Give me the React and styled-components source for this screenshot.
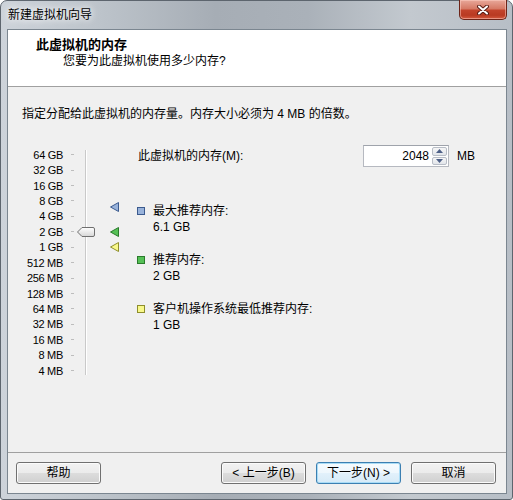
import styled, { createGlobalStyle } from 'styled-components'

const GlobalStyle = createGlobalStyle`
  html, body {
    margin: 0;
    padding: 0;
    background: #ffffff;
  }
  body {
    font-family: "Liberation Sans", "Noto Sans CJK SC", sans-serif;
    font-size: 12px;
    color: #000;
  }
`

const sizes = ['64 GB', '32 GB', '16 GB', '8 GB', '4 GB', '2 GB', '1 GB', '512 MB', '256 MB', '128 MB', '64 MB', '32 MB', '16 MB', '8 MB', '4 MB']
const ROW = 15.43

const legend = [
    { key: 'max', label: '最大推荐内存:', value: '6.1 GB', mb: 6246, fill: '#98b2da', line: '#3b5a8e' },
    { key: 'rec', label: '推荐内存:', value: '2 GB', mb: 2048, fill: '#55c056', line: '#2a7a2b' },
    { key: 'min', label: '客户机操作系统最低推荐内存:', value: '1 GB', mb: 1024, fill: '#f8f88a', line: '#8e8e2c' },
]

// row centre for a memory size on the log2 scale (64 GB at the top)
const markerTop = (mb) => 7.7 + (16 - Math.log2(mb)) * ROW - 5

const App = () => {

    return (
        <>
            <GlobalStyle />
            <Frame>
                <TitleBar>
                    <WindowTitle>新建虚拟机向导</WindowTitle>
                    <CloseButton>
                        <svg width="12" height="10" viewBox="0 0 12 10">
                            <path d="M2 1.5 L10 8.5 M10 1.5 L2 8.5" stroke="#5a1d15" strokeWidth="4" strokeLinecap="round" />
                            <path d="M2 1.5 L10 8.5 M10 1.5 L2 8.5" stroke="#fff" strokeWidth="2" strokeLinecap="round" />
                        </svg>
                    </CloseButton>
                </TitleBar>
                <Client>
                    <Header>
                        <HeaderTitle>此虚拟机的内存</HeaderTitle>
                        <HeaderSub>您要为此虚拟机使用多少内存?</HeaderSub>
                    </Header>
                    <Body>
                        <Description>指定分配给此虚拟机的内存量。内存大小必须为 4 MB 的倍数。</Description>
                        <Main>
                            <Slider>
                                <Labels>
                                    {sizes.map(s => (
                                        <LabelRow key={s}>
                                            <SizeLabel>{s}</SizeLabel>
                                            <Tick />
                                        </LabelRow>
                                    ))}
                                </Labels>
                                <TrackColumn>
                                    <TrackLine />
                                    <Thumb style={{ top: markerTop(2048) }}>
                                        <svg width="18" height="10" viewBox="0 0 18 10">
                                            <defs>
                                                <linearGradient id="thumbg" x1="0" y1="0" x2="0" y2="1">
                                                    <stop offset="0" stopColor="#ffffff" />
                                                    <stop offset="1" stopColor="#d6d6d6" />
                                                </linearGradient>
                                            </defs>
                                            <path d="M0.5 5 L5 0.5 H16 Q17.5 0.5 17.5 2 V8 Q17.5 9.5 16 9.5 H5 Z" fill="url(#thumbg)" stroke="#6f6f6f" />
                                        </svg>
                                    </Thumb>
                                </TrackColumn>
                                <MarkerColumn>
                                    {legend.map(m => (
                                        <Marker key={m.key} style={{ top: markerTop(m.mb) }}>
                                            <svg width="9" height="10" viewBox="0 0 9 10">
                                                <path d="M0.5 5 L8.5 0.5 V9.5 Z" fill={m.fill} stroke={m.line} strokeLinejoin="round" />
                                            </svg>
                                        </Marker>
                                    ))}
                                </MarkerColumn>
                            </Slider>
                            <Panel>
                                <MemRow>
                                    <MemLabel>此虚拟机的内存(M):</MemLabel>
                                    <SpinBox>
                                        <SpinValue>2048</SpinValue>
                                        <SpinButtons>
                                            <SpinButton>
                                                <svg width="7" height="4" viewBox="0 0 7 4"><path d="M0 4 L3.5 0 L7 4 Z" fill="#4e6087" /></svg>
                                            </SpinButton>
                                            <SpinButton>
                                                <svg width="7" height="4" viewBox="0 0 7 4"><path d="M0 0 L3.5 4 L7 0 Z" fill="#4e6087" /></svg>
                                            </SpinButton>
                                        </SpinButtons>
                                    </SpinBox>
                                    <Unit>MB</Unit>
                                </MemRow>
                                <Legend>
                                    {legend.map(m => (
                                        <LegendItem key={m.key}>
                                            <Swatch $fill={m.fill} $line={m.line} />
                                            <LegendText>
                                                <div>{m.label}</div>
                                                <div>{m.value}</div>
                                            </LegendText>
                                        </LegendItem>
                                    ))}
                                </Legend>
                            </Panel>
                        </Main>
                    </Body>
                    <Footer>
                        <Button>帮助</Button>
                        <Spacer />
                        <Button>&lt; 上一步(B)</Button>
                        <Button $focused>下一步(N) &gt;</Button>
                        <Button>取消</Button>
                    </Footer>
                </Client>
            </Frame>
        </>
    )

}


const Frame = styled.div`
    box-sizing: border-box;
    width: 513px;
    height: 500px;
    display: flex;
    flex-direction: column;
    padding: 0 5px 5px 6px;
    border: 1px solid #5d656e;
    border-radius: 7px 7px 3px 3px;
    background: linear-gradient(90deg, #cdd3da 0%, #bcc3ca 20%, #a6adb5 42%, #aab1b9 60%, #c3c9cf 80%, #b7bec6 100%);
`

const TitleBar = styled.div`
    height: 28px;
    display: flex;
    align-items: flex-start;
`

const WindowTitle = styled.div`
    margin: 6px 0 0 1px;
    line-height: 16px;
    text-shadow: 0 0 6px #fff, 0 0 10px rgba(255, 255, 255, 0.8);
`

const CloseButton = styled.div`
    box-sizing: border-box;
    margin: -1px 0 0 auto;
    width: 48px;
    height: 20px;
    display: flex;
    align-items: center;
    justify-content: center;
    border: 1px solid #6d2418;
    border-top: none;
    border-radius: 0 0 5px 5px;
    background: linear-gradient(#e8a89a 0%, #d67a66 45%, #c2432b 55%, #b93a22 80%, #d45a3f 100%);
    box-shadow: inset 0 0 0 1px rgba(255, 210, 200, 0.5);
`

const Client = styled.div`
    flex: 1;
    display: flex;
    flex-direction: column;
    border: 1px solid #7b8690;
    background: #f0f0f0;
`

const Header = styled.div`
    box-sizing: border-box;
    height: 57px;
    padding: 7px 0 0 28px;
    background: #ffffff;
    border-bottom: 1px solid #a0a0a0;
`

const HeaderTitle = styled.div`
    font-size: 13px;
    font-weight: bold;
    line-height: 16px;
`

const HeaderSub = styled.div`
    margin-left: 27px;
    line-height: 16px;
`

const Body = styled.div`
    flex: 1;
    padding: 19px 0 0 14px;
`

const Description = styled.div`
    line-height: 16px;
`

const Main = styled.div`
    display: flex;
    align-items: flex-start;
    margin-top: 22px;
`

const Slider = styled.div`
    display: flex;
    margin-top: 3px;
`

const Labels = styled.div`
    display: flex;
    flex-direction: column;
`

const LabelRow = styled.div`
    height: ${ROW}px;
    display: flex;
    align-items: center;
`

const SizeLabel = styled.span`
    width: 41px;
    text-align: right;
    font-size: 11px;
    letter-spacing: -0.3px;
    white-space: nowrap;
    color: #000;
`

const Tick = styled.span`
    width: 3px;
    height: 1px;
    margin-left: 8px;
    background: #bdbdbd;
`

const TrackColumn = styled.div`
    position: relative;
    width: 18px;
    margin-left: 3px;
    display: flex;
    justify-content: center;
`

const TrackLine = styled.div`
    margin: 3px 0;
    width: 0;
    border-left: 1px solid #c9c9c9;
    border-right: 1px solid #ffffff;
`

const Thumb = styled.div`
    position: absolute;
    left: 0;
    height: 10px;
    display: flex;
`

const MarkerColumn = styled.div`
    position: relative;
    width: 12px;
    margin-left: 13px;
`

const Marker = styled.div`
    position: absolute;
    left: 2px;
    display: flex;
`

const Panel = styled.div`
    margin-left: 17px;
    display: flex;
    flex-direction: column;
`

const MemRow = styled.div`
    height: 22px;
    margin-top: 1px;
    display: flex;
    align-items: center;
`

const MemLabel = styled.span`
    width: 225px;
    margin-left: 1px;
    line-height: 16px;
`

const SpinBox = styled.div`
    box-sizing: border-box;
    width: 86px;
    height: 22px;
    display: flex;
    align-items: stretch;
    padding: 1px;
    background: #ffffff;
    border: 1px solid #b6b9c0;
    border-top-color: #9fa3ab;
`

const SpinValue = styled.span`
    flex: 1;
    text-align: right;
    padding-right: 3px;
    line-height: 18px;
    font-size: 12px;
`

const SpinButtons = styled.div`
    width: 15px;
    display: flex;
    flex-direction: column;
    gap: 1px;
`

const SpinButton = styled.div`
    box-sizing: border-box;
    flex: 1;
    display: flex;
    align-items: center;
    justify-content: center;
    border: 1px solid #b8bdc6;
    border-radius: 2px;
    background: linear-gradient(#f6f6f6, #e2e5ea);
`

const Unit = styled.span`
    margin-left: 8px;
    line-height: 16px;
`

const Legend = styled.div`
    margin-top: 36px;
    display: flex;
    flex-direction: column;
    gap: 17px;
`

const LegendItem = styled.div`
    display: flex;
    align-items: flex-start;
`

const Swatch = styled.span`
    box-sizing: border-box;
    width: 8px;
    height: 8px;
    margin-top: 4px;
    background: ${p => p.$fill};
    border: 1px solid ${p => p.$line};
`

const LegendText = styled.div`
    margin-left: 8px;
    line-height: 16px;
`

const Footer = styled.div`
    display: flex;
    gap: 10px;
    padding: 9px 10px 9px 8px;
    border-top: 1px solid #a0a0a0;
`

const Spacer = styled.div`
    flex: 1;
`

const Button = styled.div`
    box-sizing: border-box;
    width: 85px;
    height: 22px;
    display: flex;
    align-items: center;
    justify-content: center;
    line-height: 16px;
    border: 1px solid ${p => p.$focused ? '#3c7fb1' : '#707070'};
    border-radius: 3px;
    background: ${p => p.$focused
        ? 'linear-gradient(#f6fbfe 0%, #eef7fd 49%, #e2f1fb 50%, #d6eaf7 100%)'
        : 'linear-gradient(#f2f2f2 0%, #ebebeb 49%, #dddddd 50%, #cfcfcf 100%)'};
    box-shadow: inset 0 0 0 1px ${p => p.$focused ? '#a9dcf6' : '#fbfbfb'};
`

export default App
